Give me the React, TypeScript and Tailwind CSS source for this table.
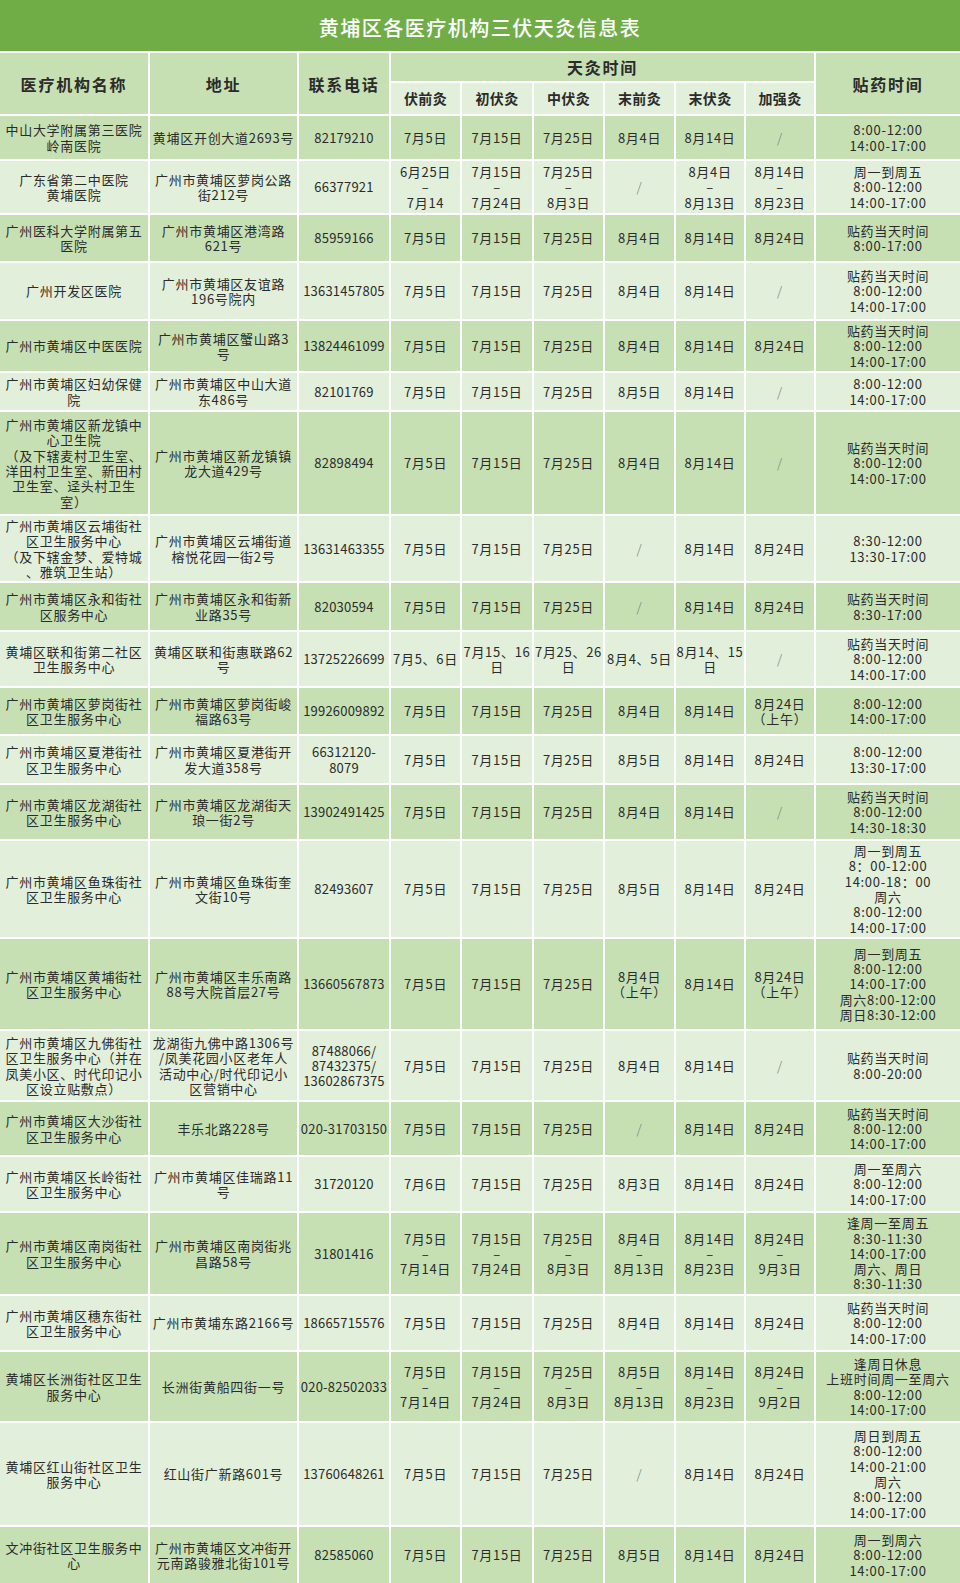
const cols = "grid grid-cols-[148px_147px_90px_69px_70px_69px_69px_68px_68px_144px] gap-x-[2px]";

type Row = { h: string; cells: string[] };

const rows: Row[] = [
  { h: "h-[43px]", cells: ["中山大学附属第三医院\n岭南医院", "黄埔区开创大道2693号", "82179210", "7月5日", "7月15日", "7月25日", "8月4日", "8月14日", "/", "8:00-12:00\n14:00-17:00"] },
  { h: "h-[52px]", cells: ["广东省第二中医院\n黄埔医院", "广州市黄埔区萝岗公路\n街212号", "66377921", "6月25日\n–\n7月14", "7月15日\n–\n7月24日", "7月25日\n–\n8月3日", "/", "8月4日\n–\n8月13日", "8月14日\n–\n8月23日", "周一到周五\n8:00-12:00\n14:00-17:00"] },
  { h: "h-[46px]", cells: ["广州医科大学附属第五\n医院", "广州市黄埔区港湾路\n621号", "85959166", "7月5日", "7月15日", "7月25日", "8月4日", "8月14日", "8月24日", "贴药当天时间\n8:00-17:00"] },
  { h: "h-[56px]", cells: ["广州开发区医院", "广州市黄埔区友谊路\n196号院内", "13631457805", "7月5日", "7月15日", "7月25日", "8月4日", "8月14日", "/", "贴药当天时间\n8:00-12:00\n14:00-17:00"] },
  { h: "h-[50px]", cells: ["广州市黄埔区中医医院", "广州市黄埔区蟹山路3\n号", "13824461099", "7月5日", "7月15日", "7月25日", "8月4日", "8月14日", "8月24日", "贴药当天时间\n8:00-12:00\n14:00-17:00"] },
  { h: "h-[37px]", cells: ["广州市黄埔区妇幼保健\n院", "广州市黄埔区中山大道\n东486号", "82101769", "7月5日", "7月15日", "7月25日", "8月5日", "8月14日", "/", "8:00-12:00\n14:00-17:00"] },
  { h: "h-[102px]", cells: ["广州市黄埔区新龙镇中\n心卫生院\n（及下辖麦村卫生室、\n洋田村卫生室、新田村\n卫生室、迳头村卫生\n室）", "广州市黄埔区新龙镇镇\n龙大道429号", "82898494", "7月5日", "7月15日", "7月25日", "8月4日", "8月14日", "/", "贴药当天时间\n8:00-12:00\n14:00-17:00"] },
  { h: "h-[65px]", cells: ["广州市黄埔区云埔街社\n区卫生服务中心\n（及下辖金梦、爱特城\n、雅筑卫生站）", "广州市黄埔区云埔街道\n榕悦花园一街2号", "13631463355", "7月5日", "7月15日", "7月25日", "/", "8月14日", "8月24日", "8:30-12:00\n13:30-17:00"] },
  { h: "h-[47px]", cells: ["广州市黄埔区永和街社\n区服务中心", "广州市黄埔区永和街新\n业路35号", "82030594", "7月5日", "7月15日", "7月25日", "/", "8月14日", "8月24日", "贴药当天时间\n8:30-17:00"] },
  { h: "h-[54px]", cells: ["黄埔区联和街第二社区\n卫生服务中心", "黄埔区联和街惠联路62\n号", "13725226699", "7月5、6日", "7月15、16\n日", "7月25、26\n日", "8月4、5日", "8月14、15\n日", "/", "贴药当天时间\n8:00-12:00\n14:00-17:00"] },
  { h: "h-[46px]", cells: ["广州市黄埔区萝岗街社\n区卫生服务中心", "广州市黄埔区萝岗街峻\n福路63号", "19926009892", "7月5日", "7月15日", "7月25日", "8月4日", "8月14日", "8月24日\n（上午）", "8:00-12:00\n14:00-17:00"] },
  { h: "h-[47px]", cells: ["广州市黄埔区夏港街社\n区卫生服务中心", "广州市黄埔区夏港街开\n发大道358号", "66312120-\n8079", "7月5日", "7月15日", "7月25日", "8月5日", "8月14日", "8月24日", "8:00-12:00\n13:30-17:00"] },
  { h: "h-[54px]", cells: ["广州市黄埔区龙湖街社\n区卫生服务中心", "广州市黄埔区龙湖街天\n琅一街2号", "13902491425", "7月5日", "7月15日", "7月25日", "8月4日", "8月14日", "/", "贴药当天时间\n8:00-12:00\n14:30-18:30"] },
  { h: "h-[96px]", cells: ["广州市黄埔区鱼珠街社\n区卫生服务中心", "广州市黄埔区鱼珠街奎\n文街10号", "82493607", "7月5日", "7月15日", "7月25日", "8月5日", "8月14日", "8月24日", "周一到周五\n8：00-12:00\n14:00-18：00\n周六\n8:00-12:00\n14:00-17:00"] },
  { h: "h-[90px]", cells: ["广州市黄埔区黄埔街社\n区卫生服务中心", "广州市黄埔区丰乐南路\n88号大院首层27号", "13660567873", "7月5日", "7月15日", "7月25日", "8月4日\n（上午）", "8月14日", "8月24日\n（上午）", "周一到周五\n8:00-12:00\n14:00-17:00\n周六8:00-12:00\n周日8:30-12:00"] },
  { h: "h-[69px]", cells: ["广州市黄埔区九佛街社\n区卫生服务中心（并在\n凤美小区、时代印记小\n区设立贴敷点）", "龙湖街九佛中路1306号\n/凤美花园小区老年人\n活动中心/时代印记小\n区营销中心", "87488066/\n87432375/\n13602867375", "7月5日", "7月15日", "7月25日", "8月4日", "8月14日", "/", "贴药当天时间\n8:00-20:00"] },
  { h: "h-[53px]", cells: ["广州市黄埔区大沙街社\n区卫生服务中心", "丰乐北路228号", "020-31703150", "7月5日", "7月15日", "7月25日", "/", "8月14日", "8月24日", "贴药当天时间\n8:00-12:00\n14:00-17:00"] },
  { h: "h-[54px]", cells: ["广州市黄埔区长岭街社\n区卫生服务中心", "广州市黄埔区佳瑞路11\n号", "31720120", "7月6日", "7月15日", "7月25日", "8月3日", "8月14日", "8月24日", "周一至周六\n8:00-12:00\n14:00-17:00"] },
  { h: "h-[81px]", cells: ["广州市黄埔区南岗街社\n区卫生服务中心", "广州市黄埔区南岗街兆\n昌路58号", "31801416", "7月5日\n–\n7月14日", "7月15日\n–\n7月24日", "7月25日\n–\n8月3日", "8月4日\n–\n8月13日", "8月14日\n–\n8月23日", "8月24日\n–\n9月3日", "逢周一至周五\n8:30-11:30\n14:00-17:00\n周六、周日\n8:30-11:30"] },
  { h: "h-[54px]", cells: ["广州市黄埔区穗东街社\n区卫生服务中心", "广州市黄埔东路2166号", "18665715576", "7月5日", "7月15日", "7月25日", "8月4日", "8月14日", "8月24日", "贴药当天时间\n8:00-12:00\n14:00-17:00"] },
  { h: "h-[69px]", cells: ["黄埔区长洲街社区卫生\n服务中心", "长洲街黄船四街一号", "020-82502033", "7月5日\n–\n7月14日", "7月15日\n–\n7月24日", "7月25日\n–\n8月3日", "8月5日\n–\n8月13日", "8月14日\n–\n8月23日", "8月24日\n–\n9月2日", "逢周日休息\n上班时间周一至周六\n8:00-12:00\n14:00-17:00"] },
  { h: "h-[102px]", cells: ["黄埔区红山街社区卫生\n服务中心", "红山街广新路601号", "13760648261", "7月5日", "7月15日", "7月25日", "/", "8月14日", "8月24日", "周日到周五\n8:00-12:00\n14:00-21:00\n周六\n8:00-12:00\n14:00-17:00"] },
  { h: "h-[56px]", cells: ["文冲街社区卫生服务中\n心", "广州市黄埔区文冲街开\n元南路骏雅北街101号", "82585060", "7月5日", "7月15日", "7月25日", "8月5日", "8月14日", "8月24日", "周一到周六\n8:00-12:00\n14:00-17:00"] },
];

const subHeads = ["伏前灸", "初伏灸", "中伏灸", "末前灸", "末伏灸", "加强灸"];

function Cell({ text, col }: { text: string; col: number }) {
  const slash = text === "/";
  return (
    <div
      className={
        "flex items-center justify-center text-center whitespace-pre-line leading-[15.3px] " +
        (col === 2 ? "tracking-[0.2px] " : "tracking-[0.7px] ") +
        (slash ? "text-[#777] font-light" : "text-[#2b2b2b]")
      }
    >
      {text}
    </div>
  );
}

export default function App() {
  return (
    <div className="w-[960px] bg-white font-['Noto_Sans_CJK_SC','Liberation_Sans',sans-serif] text-[13px]">
      <div className="h-[51px] pt-[5px] bg-[#70ad47] flex items-center justify-center text-white text-[20px] font-medium tracking-[1.5px]">
        黄埔区各医疗机构三伏天灸信息表
      </div>

      <div className={cols + " grid-rows-[28px_31px] gap-y-[2px] mt-[2px] text-[#2b2b2b] font-bold"}>
        <div className="row-span-2 bg-[#c6e0b4] flex items-center justify-center text-[16px] tracking-[1.8px]">医疗机构名称</div>
        <div className="row-span-2 bg-[#c6e0b4] flex items-center justify-center text-[16px] tracking-[1.8px]">地址</div>
        <div className="row-span-2 bg-[#c6e0b4] flex items-center justify-center text-[16px] tracking-[1.8px]">联系电话</div>
        <div className="col-span-6 bg-[#c6e0b4] flex items-center justify-center text-[16px] tracking-[1.8px]">天灸时间</div>
        <div className="row-span-2 bg-[#c6e0b4] flex items-center justify-center text-[16px] tracking-[1.8px]">贴药时间</div>
        {subHeads.map((s) => (
          <div key={s} className="bg-[#e2efda] flex items-center justify-center text-[14px] tracking-[0.3px]">
            {s}
          </div>
        ))}
      </div>

      <div className="flex flex-col gap-y-[2px] mt-[2px]">
        {rows.map((r, i) => (
          <div key={i} className={cols + " " + r.h + " " + (i % 2 === 0 ? "[&>div]:bg-[#c6e0b4]" : "[&>div]:bg-[#e2efda]")}>
            {r.cells.map((c, j) => (
              <Cell key={j} text={c} col={j} />
            ))}
          </div>
        ))}
      </div>
    </div>
  );
}
